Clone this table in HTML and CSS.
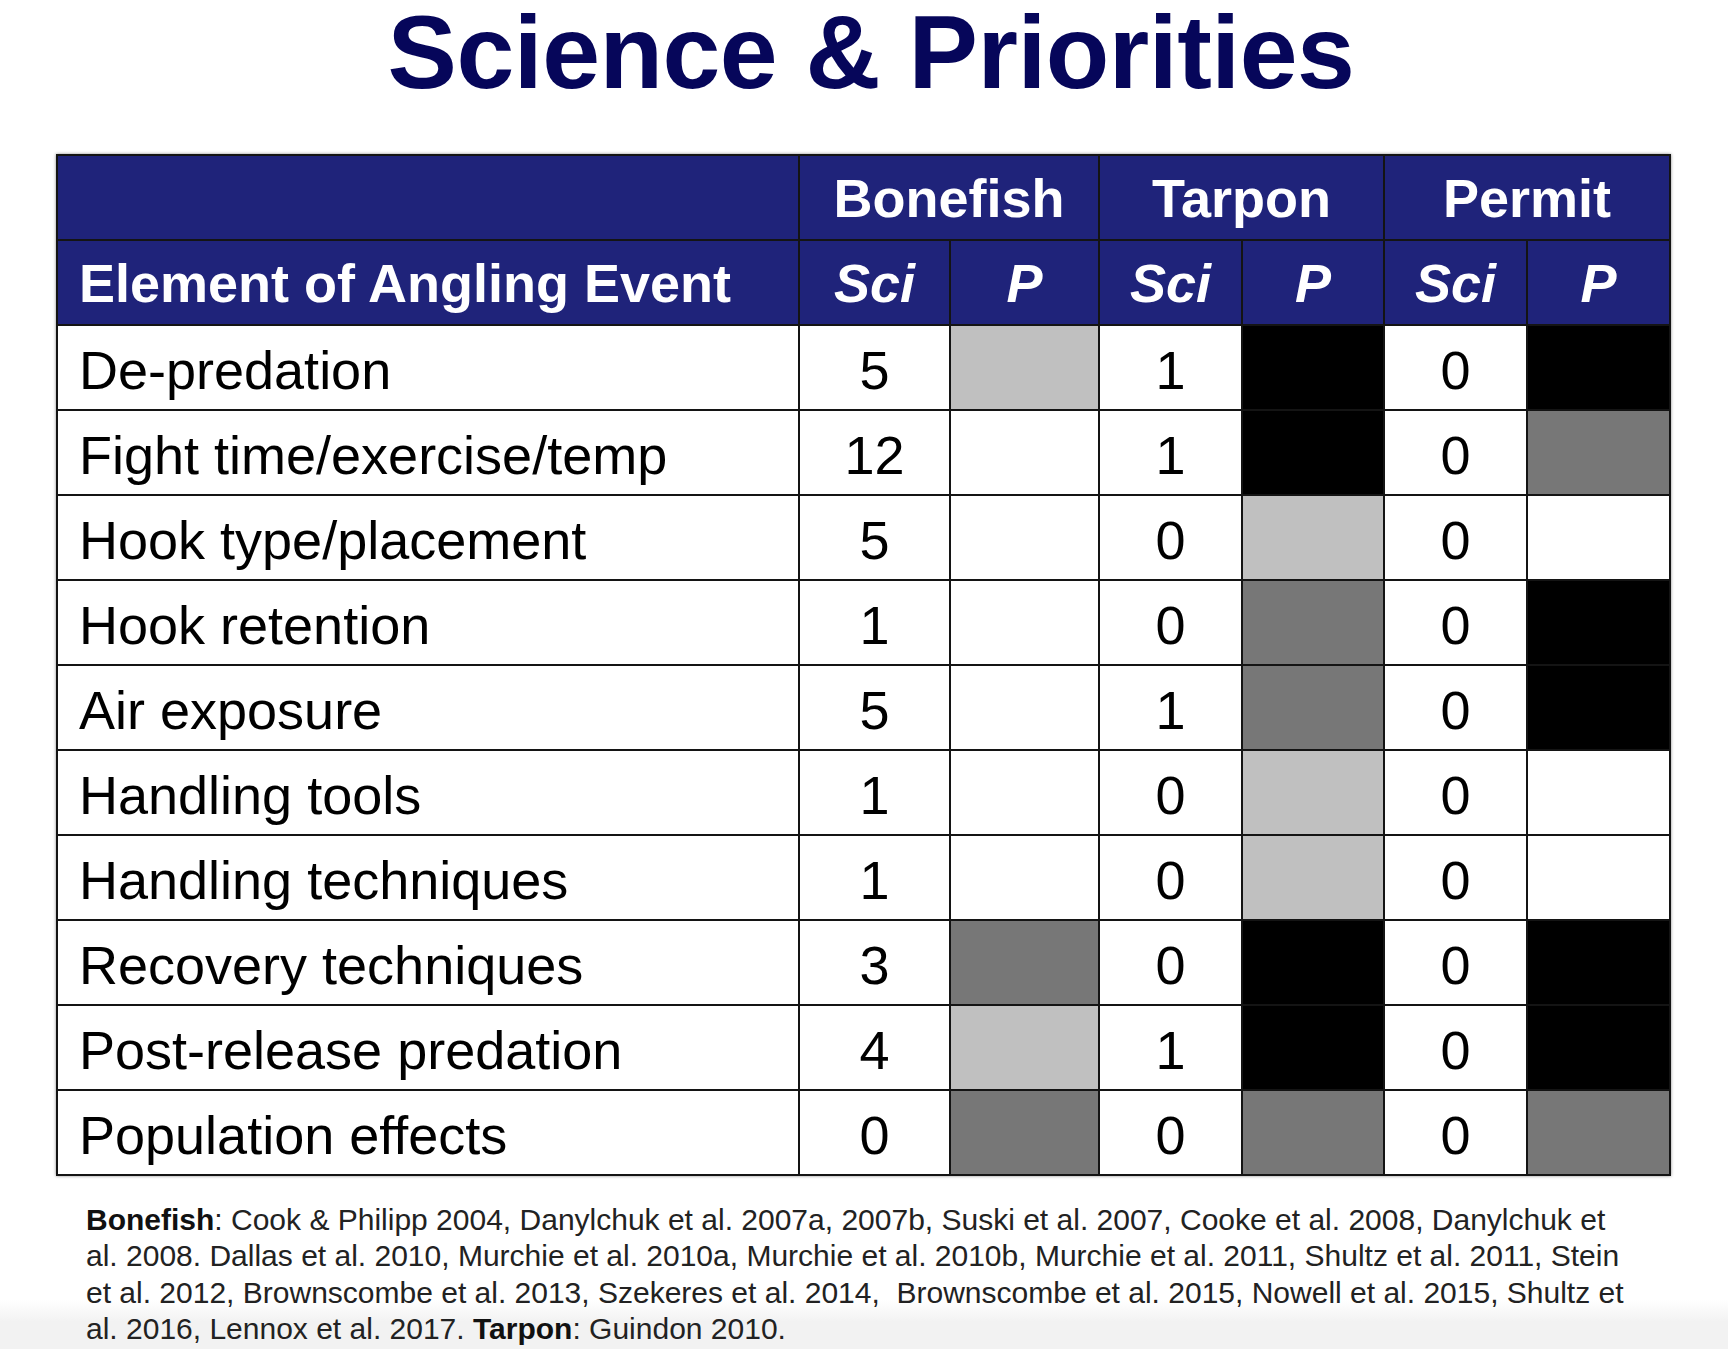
FILE: index.html
```html
<!DOCTYPE html>
<html lang="en">
<head>
<meta charset="utf-8">
<title>Science &amp; Priorities</title>
<link rel="stylesheet" href="styles.css">
</head>
<body>
<div class="slide">
  <h1 class="title">Science &amp; Priorities</h1>
  <table class="grid">
    <colgroup>
      <col class="c-el">
      <col class="c-1"><col class="c-2">
      <col class="c-3"><col class="c-4">
      <col class="c-5"><col class="c-6">
    </colgroup>
    <thead>
      <tr class="hrow">
        <th class="blank"></th>
        <th colspan="2">Bonefish</th>
        <th colspan="2">Tarpon</th>
        <th colspan="2">Permit</th>
      </tr>
      <tr class="hrow">
        <th class="el">Element of Angling Event</th>
        <th class="sub">Sci</th><th class="sub">P</th>
        <th class="sub">Sci</th><th class="sub">P</th>
        <th class="sub">Sci</th><th class="sub">P</th>
      </tr>
    </thead>
    <tbody>
      <tr><td class="el">De-predation</td><td class="n">5</td><td class="p lt"></td><td class="n">1</td><td class="p bk"></td><td class="n">0</td><td class="p bk"></td></tr>
      <tr><td class="el">Fight time/exercise/temp</td><td class="n">12</td><td class="p"></td><td class="n">1</td><td class="p bk"></td><td class="n">0</td><td class="p md"></td></tr>
      <tr><td class="el">Hook type/placement</td><td class="n">5</td><td class="p"></td><td class="n">0</td><td class="p lt"></td><td class="n">0</td><td class="p"></td></tr>
      <tr><td class="el">Hook retention</td><td class="n">1</td><td class="p"></td><td class="n">0</td><td class="p md"></td><td class="n">0</td><td class="p bk"></td></tr>
      <tr><td class="el">Air exposure</td><td class="n">5</td><td class="p"></td><td class="n">1</td><td class="p md"></td><td class="n">0</td><td class="p bk"></td></tr>
      <tr><td class="el">Handling tools</td><td class="n">1</td><td class="p"></td><td class="n">0</td><td class="p lt"></td><td class="n">0</td><td class="p"></td></tr>
      <tr><td class="el">Handling techniques</td><td class="n">1</td><td class="p"></td><td class="n">0</td><td class="p lt"></td><td class="n">0</td><td class="p"></td></tr>
      <tr><td class="el">Recovery techniques</td><td class="n">3</td><td class="p md"></td><td class="n">0</td><td class="p bk"></td><td class="n">0</td><td class="p bk"></td></tr>
      <tr><td class="el">Post-release predation</td><td class="n">4</td><td class="p lt"></td><td class="n">1</td><td class="p bk"></td><td class="n">0</td><td class="p bk"></td></tr>
      <tr><td class="el">Population effects</td><td class="n">0</td><td class="p md"></td><td class="n">0</td><td class="p md"></td><td class="n">0</td><td class="p md"></td></tr>
    </tbody>
  </table>
  <p class="refs"><b>Bonefish</b>: Cook &amp; Philipp 2004, Danylchuk et al. 2007a, 2007b, Suski et al. 2007, Cooke et al. 2008, Danylchuk et al. 2008. Dallas et al. 2010, Murchie et al. 2010a, Murchie et al. 2010b, Murchie et al. 2011, Shultz et al. 2011, Stein et al. 2012, Brownscombe et al. 2013, Szekeres et al. 2014,&nbsp; Brownscombe et al. 2015, Nowell et al. 2015, Shultz et al. 2016, Lennox et al. 2017. <b>Tarpon</b>: Guindon 2010.</p>
</div>
</body>
</html>
```

FILE: styles.css
```css
html, body {
  margin: 0;
  padding: 0;
}

html {
  min-height: 1349px;
  background: linear-gradient(to bottom, #ffffff 0, #ffffff 1300px, #f2f2f2 1322px, #f2f2f2 100%);
}

body {
  font-family: "Liberation Sans", Arial, Helvetica, sans-serif;
  color: #000;
  min-height: 1349px;
}

.slide {
  display: flex;
  flex-direction: column;
  align-items: flex-start;
  padding: 0 0 0 56px;
}

.title {
  align-self: stretch;
  margin: 0 0 50px -56px;
  padding-left: 14px;
  font-size: 104px;
  line-height: 104px;
  font-weight: 700;
  text-align: center;
  color: #06065a;
  letter-spacing: -0.5px;
}

.grid {
  width: 1613px;
  table-layout: fixed;
  border-collapse: collapse;
  box-shadow: 0 0 3px rgba(0, 0, 0, 0.45);
  background: #fff;
}

.c-el { width: 742px; }
.c-1 { width: 151px; }
.c-2 { width: 149px; }
.c-3 { width: 143px; }
.c-4 { width: 142px; }
.c-5 { width: 143px; }
.c-6 { width: 143px; }

.grid th,
.grid td {
  border: 2px solid #141414;
  padding: 0;
  font-size: 54px;
  line-height: 60px;
}

.hrow th {
  height: 83px;
  background: #1f237a;
  color: #ffffff;
  font-weight: 700;
  text-align: center;
}

.hrow th.el {
  text-align: left;
  padding-left: 21px;
}

.hrow th.sub {
  font-style: italic;
}

.grid td {
  height: 79px;
  vertical-align: middle;
  padding-top: 4px;
}

.grid td.el {
  text-align: left;
  padding-left: 21px;
}

.grid td.n {
  text-align: center;
}

.grid td.p { background: #ffffff; }
.grid td.lt { background: #c0c0c0; }
.grid td.md { background: #777777; }
.grid td.bk { background: #000000; }

.refs {
  width: 1550px;
  margin: 26px 0 0 30px;
  font-size: 30px;
  line-height: 36.3px;
  color: #222;
}

.refs b {
  font-weight: 700;
  color: #111;
}
```
